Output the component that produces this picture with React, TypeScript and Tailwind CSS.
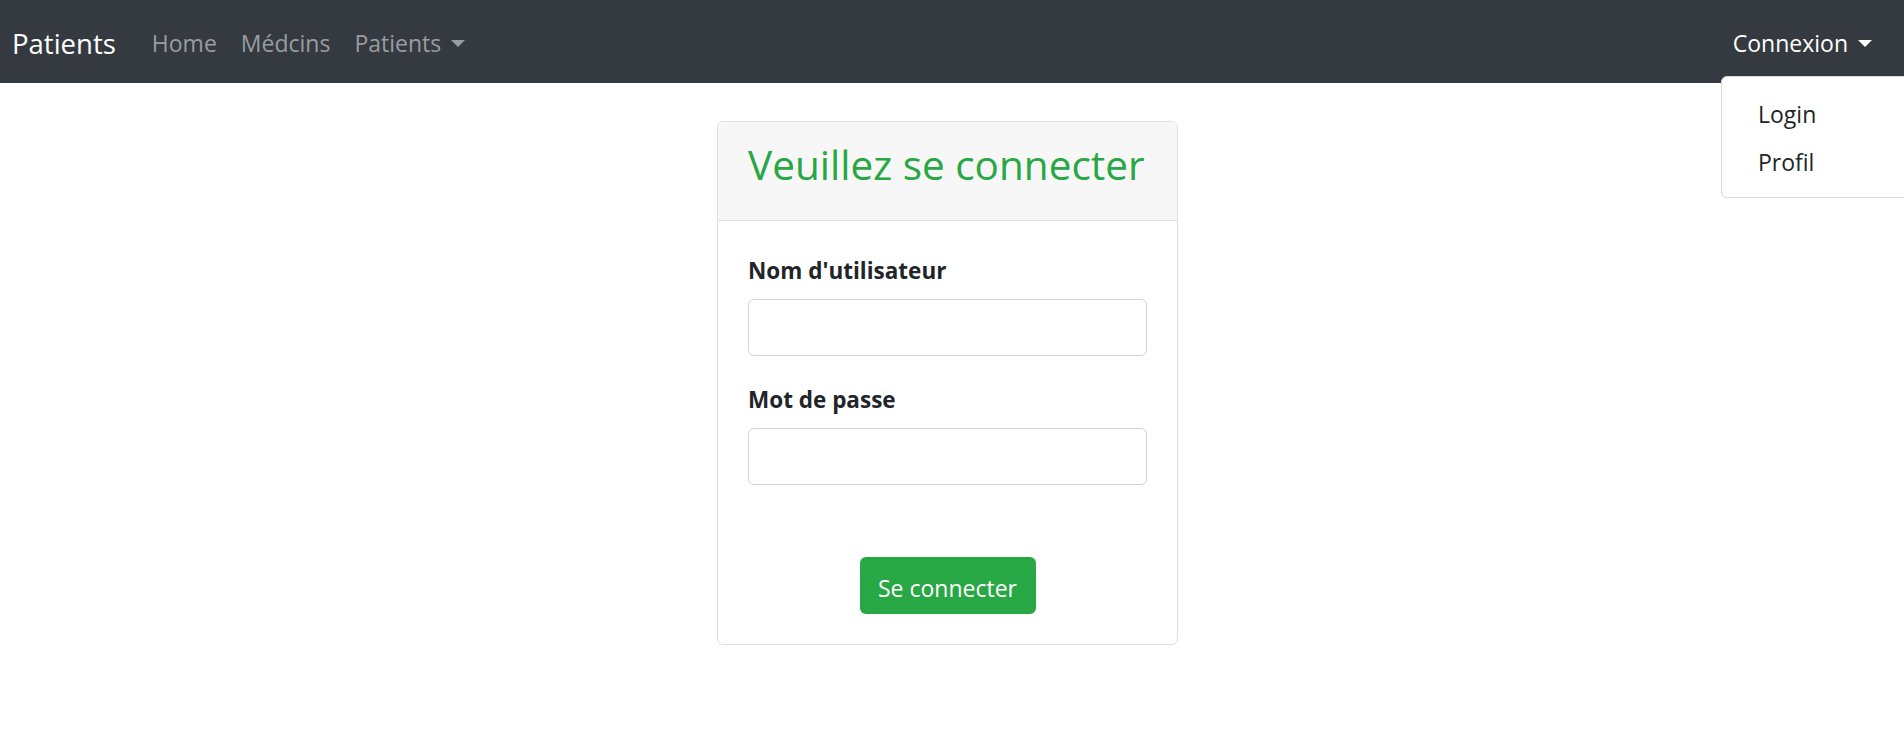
import React, { useState } from 'react';

const Caret = ({ className }: { className: string }) => (
    <span className={`inline-block ml-[10px] align-middle w-0 h-0 border-l-[7px] border-r-[7px] border-t-[7px] border-l-transparent border-r-transparent ${className}`}></span>
);

const App: React.FC = () => {
    const [username, setUsername] = useState('');
    const [password, setPassword] = useState('');

    return (
        <div className="relative w-full h-[738px] overflow-hidden bg-white font-['Open_Sans',sans-serif] text-[#212529]">
            {/* Navbar */}
            <nav className="h-[83px] bg-[#343a40] flex items-center justify-between pl-[12px] pr-[20px] pt-[4px]">
                <div className="flex items-center">
                    <a href="#" className="text-white text-[27.5px] mr-[24px] leading-none">Patients</a>
                    <a href="#" className="text-[#9a9da0] text-[23px] px-[12px]">Home</a>
                    <a href="#" className="text-[#9a9da0] text-[23px] px-[12px]">Médcins</a>
                    <a href="#" className="text-[#9a9da0] text-[23px] px-[12px] flex items-center">
                        Patients
                        <Caret className="border-t-[#9a9da0]" />
                    </a>
                </div>
                <div className="relative">
                    <a href="#" className="text-white text-[23px] px-[12px] flex items-center">
                        Connexion
                        <Caret className="border-t-white" />
                    </a>
                </div>
            </nav>

            {/* Dropdown menu */}
            <div className="absolute left-[1721px] top-[76px] w-[240px] bg-white border border-[#d9d9d9] rounded-[6px] pt-[13px] pb-[11px] z-10">
                <a href="#" className="block px-[36px] h-[48px] leading-[48px] text-[23px] text-[#212529]">Login</a>
                <a href="#" className="block px-[36px] h-[48px] leading-[48px] text-[23px] text-[#212529]">Profil</a>
            </div>

            {/* Login card */}
            <div className="flex justify-center pr-[9px] pt-[38px]">
                <div className="w-[461px] border border-[#dfdfdf] rounded-[6px] overflow-hidden">
                    <div className="bg-[#f7f7f7] border-b border-[#dfdfdf] px-[30px] pt-[18px] pb-[30px]">
                        <h3 className="text-[40.5px] leading-[50px] text-[#28a745]">Veuillez se connecter</h3>
                    </div>
                    <form className="p-[30px]" onSubmit={(e) => e.preventDefault()}>
                        <div className="mb-[24px]">
                            <label htmlFor="username" className="block mb-[10px] pt-[2px] h-[38px] text-[22.5px] leading-[36px] font-bold">Nom d'utilisateur</label>
                            <input
                                id="username"
                                type="text"
                                value={username}
                                onChange={(e) => setUsername(e.target.value)}
                                className="block w-full h-[57px] border border-[#ced4da] rounded-[6px] px-[18px] text-[23px] outline-none"
                            />
                        </div>
                        <div className="mb-[24px]">
                            <label htmlFor="password" className="block mb-[10px] pt-[2px] h-[38px] text-[22.5px] leading-[36px] font-bold">Mot de passe</label>
                            <input
                                id="password"
                                type="password"
                                value={password}
                                onChange={(e) => setPassword(e.target.value)}
                                className="block w-full h-[57px] border border-[#ced4da] rounded-[6px] px-[18px] text-[23px] outline-none"
                            />
                        </div>
                        <div className="flex justify-center pt-[48px]">
                            <button type="submit" className="w-[176px] h-[57px] bg-[#28a745] text-white text-[23px] leading-[57px] pt-[3px] rounded-[6px]">
                                Se connecter
                            </button>
                        </div>
                    </form>
                </div>
            </div>
        </div>
    );
};

export default App;
